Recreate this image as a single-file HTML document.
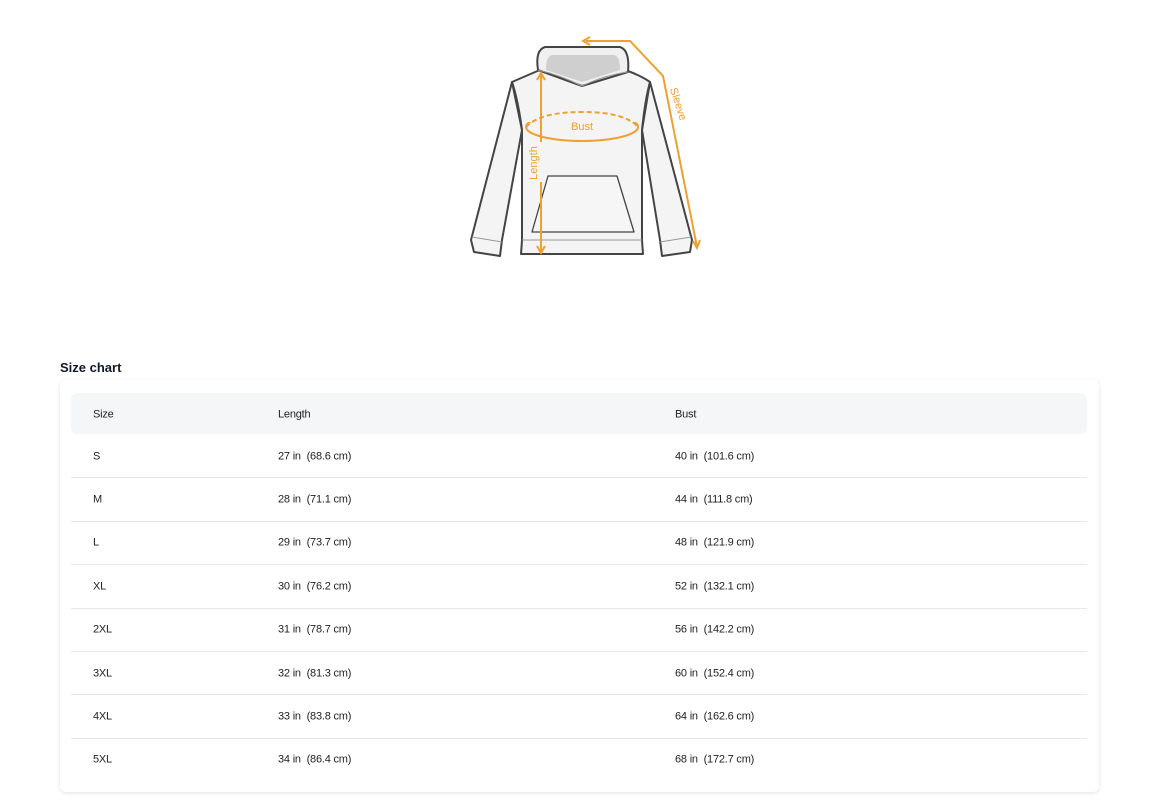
<!DOCTYPE html>
<html><head><meta charset="utf-8"><style>
body{margin:0;background:#fff;font-family:"Liberation Sans",sans-serif;color:#1a1a1a;width:1156px;height:807px;position:relative;overflow:hidden}
h2{position:absolute;left:60px;top:360px;margin:0;font-size:13px;font-weight:bold;color:#111827}
.card{position:absolute;left:60px;top:380px;width:1039px;height:412px;background:#fff;border-radius:6px;box-shadow:0 1px 4px rgba(0,0,0,.12)}
.hd{position:absolute;left:11px;top:13px;width:1016px;height:41px;background:#f5f6f8;border-radius:6px}
.row{position:absolute;left:11px;width:1016px;height:43.4px;border-bottom:1px solid #e5e7eb;font-size:11px}
.row span,.hd span{position:absolute;top:50%;transform:translateY(-45%);font-size:11px;color:#222;letter-spacing:-0.2px}
.c1{left:22px}.c2{left:207px}.c3{left:604px}
</style></head><body>
<svg width="1156" height="300" style="position:absolute;left:0;top:0">
<g fill="#f4f4f4" stroke="#444" stroke-width="2" stroke-linejoin="round">
<path d="M512,82 L471,240 L474,252 L500,256 L502,240 L522,130 Z"/>
<path d="M650,82 L692,240 L690,252 L662,256 L660,240 L642,130 Z"/>
<path d="M512,82 Q535,72 540,70 L625,70 Q640,75 650,82 Q645,100 642,130 L642,240 L643,254 L521,254 L522,240 L522,130 Q518,100 512,82 Z"/>
<path d="M538,70 Q535,50 545,47 L620,47 Q630,50 628,72 L582,86 Z" fill="#f0f0f0"/>
<path d="M546,70 Q546,56 552,55 L614,55 Q620,56 620,70 L582,82 Z" fill="#cfcfcf" stroke="none"/>
<path d="M548,176 L617,176 L634,232 L532,232 Z" fill="#f6f6f6" stroke-width="1.3"/>
</g>
<g stroke="#999" stroke-width="1" fill="none">
<line x1="522" y1="240" x2="642" y2="240"/><line x1="472" y1="237" x2="502" y2="242"/><line x1="660" y1="242" x2="691" y2="237"/>
<path d="M538,70 Q560,75 582,86 Q605,75 628,72"/>
</g>
<g stroke="#f0a030" stroke-width="2" fill="none">
<ellipse cx="582" cy="127" rx="56" ry="14"/>
</g>
<rect x="528" y="106" width="110" height="16" fill="#f4f4f4"/>
<g stroke="#f0a030" stroke-width="2" fill="none">
<line x1="541" y1="74" x2="541" y2="253"/>
<path d="M586,41 L630,41 L663,76 L697,247"/>
<path d="M537,80 L541,73 L545,80 M537,246 L541,253 L545,246 M590,37 L583,41 L590,45 M693,241 L697,248 L700,240"/>
<path d="M526,127 Q540,112 582,112 Q625,112 638,127" stroke-dasharray="5,3"/>
</g>
<rect x="530" y="142" width="12" height="40" fill="#f4f4f4"/>
<text x="582" y="130" fill="#f0a030" font-size="11" text-anchor="middle" font-family="Liberation Sans">Bust</text>
<text transform="translate(537,163) rotate(-90)" fill="#f0a030" font-size="11" text-anchor="middle" font-family="Liberation Sans">Length</text>
<text transform="translate(675,105) rotate(72)" fill="#f0a030" font-size="11" text-anchor="middle" font-family="Liberation Sans">Sleeve</text>
</svg>
<h2>Size chart</h2>
<div class="card">
<div class="hd"><span class="c1">Size</span><span class="c2">Length</span><span class="c3">Bust</span></div>
<div class="row" style="top:54px"><span class="c1">S</span><span class="c2">27 in &nbsp;(68.6 cm)</span><span class="c3">40 in &nbsp;(101.6 cm)</span></div>
<div class="row" style="top:97.4px"><span class="c1">M</span><span class="c2">28 in &nbsp;(71.1 cm)</span><span class="c3">44 in &nbsp;(111.8 cm)</span></div>
<div class="row" style="top:140.8px"><span class="c1">L</span><span class="c2">29 in &nbsp;(73.7 cm)</span><span class="c3">48 in &nbsp;(121.9 cm)</span></div>
<div class="row" style="top:184.2px"><span class="c1">XL</span><span class="c2">30 in &nbsp;(76.2 cm)</span><span class="c3">52 in &nbsp;(132.1 cm)</span></div>
<div class="row" style="top:227.6px"><span class="c1">2XL</span><span class="c2">31 in &nbsp;(78.7 cm)</span><span class="c3">56 in &nbsp;(142.2 cm)</span></div>
<div class="row" style="top:271px"><span class="c1">3XL</span><span class="c2">32 in &nbsp;(81.3 cm)</span><span class="c3">60 in &nbsp;(152.4 cm)</span></div>
<div class="row" style="top:314.4px"><span class="c1">4XL</span><span class="c2">33 in &nbsp;(83.8 cm)</span><span class="c3">64 in &nbsp;(162.6 cm)</span></div>
<div class="row" style="top:357.8px;border-bottom:none"><span class="c1">5XL</span><span class="c2">34 in &nbsp;(86.4 cm)</span><span class="c3">68 in &nbsp;(172.7 cm)</span></div>
</div>
</body></html>
